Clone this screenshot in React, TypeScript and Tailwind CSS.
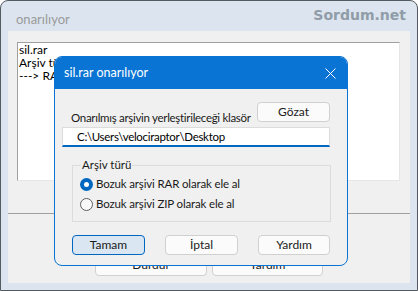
import React from "react";

const font = { fontFamily: 'Lato, "Noto Sans", sans-serif' };

const Radio = ({ checked, label }: { checked?: boolean; label: string }) => (
  <div className="flex items-center h-[20px]">
    {checked ? (
      <span className="w-[13px] h-[13px] rounded-full bg-[#0067c0] flex items-center justify-center">
        <span className="w-[5px] h-[5px] rounded-full bg-white" />
      </span>
    ) : (
      <span className="w-[13px] h-[13px] rounded-full border border-[#5f5f5f] bg-[#f9f9f9]" />
    )}
    <span className="ml-[3px] text-[11.5px] tracking-[-0.15px] text-[#1a1a1a] whitespace-nowrap">{label}</span>
  </div>
);

const Btn = ({ children, primary, className = "" }: { children: React.ReactNode; primary?: boolean; className?: string }) => (
  <div
    className={`h-[20px] flex items-center justify-center rounded-[4px] text-[12px] text-[#1a1a1a] ${
      primary ? "border border-[#0067c0] bg-[#dae6f2]" : "border border-[#d0d0d0] bg-[#fbfbfb]"
    } ${className}`}
  >
    {children}
  </div>
);

export default function App() {
  return (
    <div className="w-[418px] h-[291px] bg-white" style={font}>
      <div className="relative w-[418px] h-[291px] rounded-t-[8px] border border-[#555a60] bg-[#dce5ef] flex flex-col overflow-hidden">
        {/* background window title bar */}
        <div className="h-[30px] flex items-center justify-between pl-[15px] pr-[11px] shrink-0">
          <span className="text-[13px] text-[#9a9a9a] mt-[8px]">onarılıyor</span>
          <span
            className="text-[14px] font-bold text-[#909ca8] -mt-[2px]"
            style={{ fontFamily: '"DejaVu Sans", sans-serif' }}
          >
            Sordum.net
          </span>
        </div>
        <div className="mx-[7px] mb-[7px] flex-1 bg-[#f0f0f0] flex flex-col">
          <div className="mt-[11px] ml-[9px] mr-[10px] h-[139px] bg-white border border-[#a0a0a0] border-r-[#e6e6e6] border-b-[#e6e6e6] px-[1px] text-[12px] leading-[13px] text-black">
            <div>sil.rar</div>
            <div>Arşiv türü</div>
            <div>---&gt; RAR</div>
          </div>
          <div className="mt-[32px] h-px bg-[#a0a0a0]" />
          <div className="flex mt-[40px] ml-[87px] gap-[5px]">
            <Btn className="w-[112px] h-[22px]">Durdur</Btn>
            <Btn className="w-[111px] h-[22px]">Yardım</Btn>
          </div>
        </div>

        {/* dialog */}
        <div className="absolute left-[53px] top-[55px] w-[294px] h-[210px] rounded-[8px] border border-[#0a74d4] bg-[#f0f0f0] overflow-hidden flex flex-col">
          <div className="h-[32px] bg-[#0a74d4] flex items-center justify-between pl-[9px] pr-[10px] shrink-0">
            <span className="text-[12.5px] text-white mt-[1px]">sil.rar onarılıyor</span>
            <svg width="11" height="11" viewBox="0 0 11 11" className="mr-[1px]">
              <path d="M0.5 0.5 L10.5 10.5 M10.5 0.5 L0.5 10.5" stroke="white" strokeWidth="1" />
            </svg>
          </div>
          <div className="flex items-end justify-between mt-[13px] pl-[16px] pr-[17px]">
            <span className="text-[11.5px] tracking-[-0.3px] text-[#1a1a1a] leading-[14px] -mb-[3px] whitespace-nowrap">Onarılmış arşivin yerleştirileceği klasör</span>
            <Btn className="w-[73px] shrink-0">Gözat</Btn>
          </div>
          <div className="mt-[5px] ml-[7px] w-[268px] h-[20px] bg-white border border-[#dcdcdc] border-b-2 border-b-[#0067c0] pl-[14px] flex items-center text-[11.5px] tracking-[-0.3px] text-black">
            C:\Users\velociraptor\Desktop
          </div>
          <fieldset className="mt-[10px] ml-[17px] w-[259px] h-[65px] border border-[#dcdcdc] pl-[7px]">
            <legend className="ml-[1px] px-[1px] text-[11.5px] text-[#1a1a1a] leading-[16px]">Arşiv türü</legend>
            <div className="mt-[1px]">
              <Radio checked label="Bozuk arşivi RAR olarak ele al" />
              <Radio label="Bozuk arşivi ZIP olarak ele al" />
            </div>
          </fieldset>
          <div className="flex mt-[13px] ml-[17px] gap-[20px]">
            <Btn primary className="w-[73px]">Tamam</Btn>
            <Btn className="w-[73px]">İptal</Btn>
            <Btn className="w-[72px]">Yardım</Btn>
          </div>
        </div>
      </div>
    </div>
  );
}
